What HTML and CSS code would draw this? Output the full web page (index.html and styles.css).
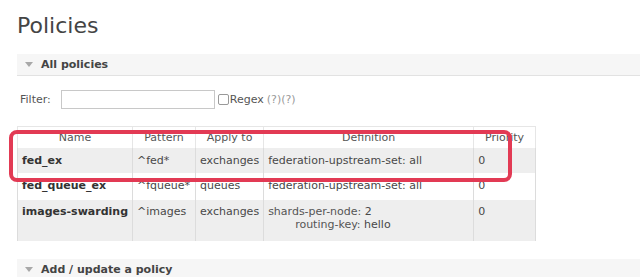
FILE: index.html
```html
<!DOCTYPE html>
<html>
<head>
	<title>Policies</title>
	<meta charset="utf-8">
	<link rel="stylesheet" href="styles.css">
</head>
<body>
	<h1>Policies</h1>

	<!--All policies section-->
	<div class="section">
		<h2><span class="arrow"></span>All policies</h2>
		<div class="filter">
			<label>Filter:</label>
			<input type="text" class="filter-box">
			<span class="check"></span>Regex <span class="help">(?)(?)</span>
		</div>

		<div class="table-wrap">
			<table class="list">
				<tr>
					<th class="c-name">Name</th>
					<th class="c-pattern">Pattern</th>
					<th class="c-apply">Apply to</th>
					<th class="c-def">Definition</th>
					<th class="c-prio">Priority</th>
				</tr>
				<tr class="alt">
					<td><b>fed_ex</b></td>
					<td>^fed*</td>
					<td>exchanges</td>
					<td>federation-upstream-set: all</td>
					<td>0</td>
				</tr>
				<tr class="mid">
					<td><b>fed_queue_ex</b></td>
					<td>^fqueue*</td>
					<td>queues</td>
					<td>federation-upstream-set: all</td>
					<td>0</td>
				</tr>
				<tr class="alt tall">
					<td><b>images-swarding</b></td>
					<td>^images</td>
					<td>exchanges</td>
					<td>
						<div class="kv"><span class="k">shards-per-node:</span> 2</div>
						<div class="kv"><span class="k">routing-key:</span> hello</div>
					</td>
					<td>0</td>
				</tr>
			</table>
			<!--highlight drawn over the first row-->
			<div class="mark"></div>
		</div>
	</div>

	<!--Add policy section-->
	<div class="section">
		<h2><span class="arrow"></span>Add / update a policy</h2>
	</div>
</body>
</html>
```

FILE: styles.css
```css
*{
	box-sizing: border-box;
}

body{
	margin: 0;
	padding: 0 0 0 17px;
	font-family: "DejaVu Sans", Verdana, sans-serif;
	font-size: 11px;
	color: #484848;
	background: #fff;
}

h1{
	margin: 0;
	padding-top: 13px;
	height: 54px;
	font-size: 22px;
	font-weight: normal;
	color: #444;
}

h2{
	margin: 0;
	height: 22px;
	padding-left: 8px;
	display: flex;
	align-items: center;
	font-size: 11px;
	font-weight: bold;
	color: #444;
	background: #f6f6f6;
	border-bottom: 1px solid #e2e2e2;
}

.arrow{
	width: 0;
	height: 0;
	margin-right: 8px;
	border-left: 4px solid transparent;
	border-right: 4px solid transparent;
	border-top: 5px solid #a8a8a8;
}

.filter{
	display: flex;
	align-items: center;
	height: 46px;
	padding-left: 3px;
	color: #555;
}

.filter label{
	margin-right: 10px;
}

.filter-box{
	width: 154px;
	height: 19px;
	border: 1px solid #c8c8c8;
	margin: 0 3px 0 0;
}

.check{
	width: 11px;
	height: 11px;
	border: 1px solid #999;
	border-radius: 2px;
	margin-right: 1px;
}

.help{
	color: #999;
	margin-left: 3px;
}

.table-wrap{
	position: relative;
	margin-top: 4px;
	margin-bottom: 18px;
}

.list{
	border-collapse: collapse;
	width: 519px;
}

.list th{
	font-weight: normal;
	height: 21px;
	padding: 0 4px;
	text-align: center;
	color: #555;
	border: 1px solid #e6e6e6;
	border-bottom: none;
}

.list td{
	height: 25px;
	padding: 0 4px;
	text-align: left;
	vertical-align: top;
	padding-top: 6px;
	border: 1px solid #dcdcdc;
	border-top: none;
	border-bottom: none;
	white-space: nowrap;
}

.list tr.alt td{
	background: #eeeeee;
}

.list tr.mid td{
	height: 27px;
}

.list tr.tall td{
	height: 41px;
	padding-top: 5px;
}

.list td b{
	color: #333;
}

.c-name{ width: 115px; }
.c-pattern{ width: 63px; }
.c-apply{ width: 67px; }
.c-def{ width: 210px; }

.kv .k{
	color: #555;
}

.kv + .kv{
	padding-left: 27px;
}

.mark{
	position: absolute;
	left: -8px;
	top: 4px;
	width: 503px;
	height: 52px;
	border: 4px solid #e23a54;
	border-radius: 8px;
}
```
